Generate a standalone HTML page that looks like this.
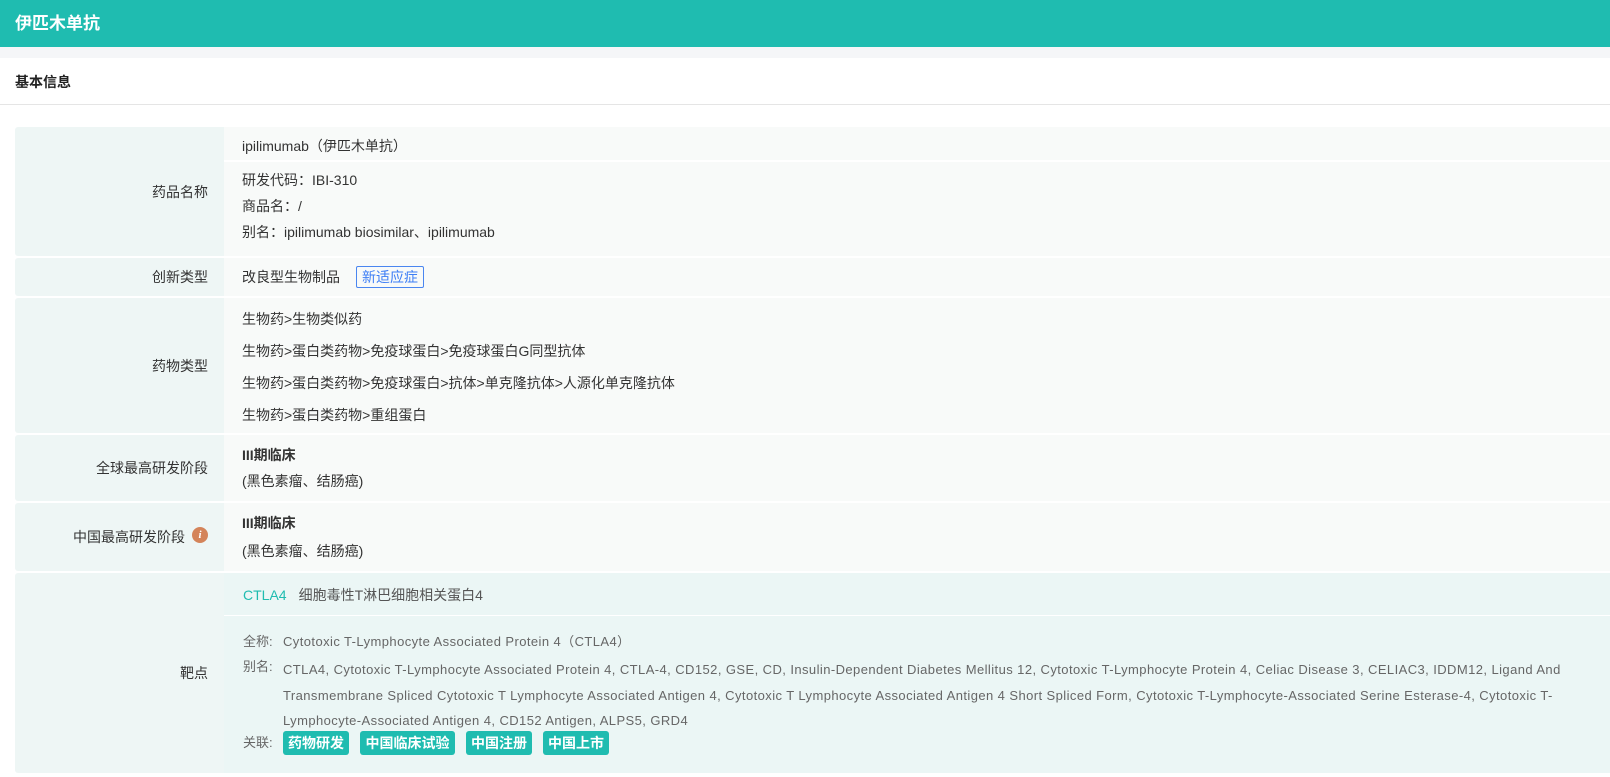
<!DOCTYPE html>
<html><head><meta charset="utf-8"><style>
*{margin:0;padding:0;box-sizing:border-box}
body{width:1610px;height:777px;overflow:hidden;background:#fff;font-family:"Liberation Sans","Noto Sans CJK SC",sans-serif;font-size:14px;color:#333;position:relative}
.hdr{position:absolute;left:0;top:0;width:1610px;height:47px;background:#1fbcb0;color:#fff;font-weight:bold;font-size:17px;line-height:47px;padding-left:15px}
.gray{position:absolute;left:0;top:47px;width:1610px;height:11px;background:#f5f6f8}
.sec{position:absolute;left:15px;top:71px;font-weight:bold;font-size:14px;line-height:22px;color:#222}
.line{position:absolute;left:0;top:104px;width:1610px;height:1px;background:#e5e5e5}
.lab{position:absolute;left:15px;width:209px;background:#eef6f5;border-radius:3px 0 0 3px;text-align:right;padding-right:16px;display:flex;align-items:center;justify-content:flex-end}
.val{position:absolute;left:224px;width:1386px;background:#f8faf9}
.t{position:absolute;white-space:nowrap;line-height:20px}
.tag{position:absolute;height:24px;line-height:24px;background:#1fbcb0;color:#fff;font-weight:bold;border-radius:3px;font-size:14px;text-align:center;white-space:nowrap}
.g{color:#666;font-size:13px;letter-spacing:0.42px}
</style></head><body>
<div class="hdr">伊匹木单抗</div>
<div class="gray"></div>
<div class="sec">基本信息</div>
<div class="line"></div>

<div class="lab" style="top:127px;height:129px">药品名称</div>
<div class="val" style="top:127px;height:33px"></div>
<div class="val" style="top:162px;height:94px"></div>
<div class="t" style="left:242px;top:136px">ipilimumab（伊匹木单抗）</div>
<div class="t" style="left:242px;top:170px">研发代码：IBI-310</div>
<div class="t" style="left:242px;top:196px">商品名：/</div>
<div class="t" style="left:242px;top:222px">别名：ipilimumab biosimilar、ipilimumab</div>

<div class="lab" style="top:258px;height:38px">创新类型</div>
<div class="val" style="top:258px;height:38px"></div>
<div class="t" style="left:242px;top:267px">改良型生物制品</div>
<div class="t" style="left:356px;top:266px;height:22px;line-height:20px;border:1px solid #4a86f0;color:#3d7ef5;padding:0 5px;border-radius:2px">新适应症</div>

<div class="lab" style="top:298px;height:135px">药物类型</div>
<div class="val" style="top:298px;height:135px"></div>
<div class="t" style="left:242px;top:309px">生物药&gt;生物类似药</div>
<div class="t" style="left:242px;top:341px">生物药&gt;蛋白类药物&gt;免疫球蛋白&gt;免疫球蛋白G同型抗体</div>
<div class="t" style="left:242px;top:373px">生物药&gt;蛋白类药物&gt;免疫球蛋白&gt;抗体&gt;单克隆抗体&gt;人源化单克隆抗体</div>
<div class="t" style="left:242px;top:405px">生物药&gt;蛋白类药物&gt;重组蛋白</div>

<div class="lab" style="top:435px;height:66px">全球最高研发阶段</div>
<div class="val" style="top:435px;height:66px"></div>
<div class="t" style="left:242px;top:445px;font-weight:bold">III期临床</div>
<div class="t" style="left:242px;top:471px">(黑色素瘤、结肠癌)</div>

<div class="lab" style="top:503px;height:68px">中国最高研发阶段<span style="display:inline-block;width:16px;height:16px;border-radius:50%;background:#d4845a;color:#fff;font-size:11px;font-style:italic;font-family:'Liberation Serif',serif;font-weight:bold;line-height:16px;text-align:center;margin-left:7px;margin-top:-4px">i</span></div>
<div class="val" style="top:503px;height:68px"></div>
<div class="t" style="left:242px;top:513px;font-weight:bold">III期临床</div>
<div class="t" style="left:242px;top:541px">(黑色素瘤、结肠癌)</div>

<div class="lab" style="top:573px;height:200px">靶点</div>
<div class="val" style="top:573px;height:42px;background:#ebf6f5"></div>
<div class="val" style="top:616px;height:157px;background:#ebf6f5"></div>
<div class="t" style="left:243px;top:585px;font-size:14px"><span style="color:#1fbcb0">CTLA4</span><span style="color:#555;margin-left:12px">细胞毒性T淋巴细胞相关蛋白4</span></div>
<div class="t g" style="left:243px;top:632px;letter-spacing:0">全称:</div>
<div class="t g" style="left:283px;top:632px">Cytotoxic T-Lymphocyte Associated Protein 4（CTLA4）</div>
<div class="t g" style="left:243px;top:657px;letter-spacing:0">别名:</div>
<div class="g" style="position:absolute;left:283px;top:657px;width:1285px;line-height:25.5px;white-space:normal">CTLA4, Cytotoxic T-Lymphocyte Associated Protein 4, CTLA-4, CD152, GSE, CD, Insulin-Dependent Diabetes Mellitus 12, Cytotoxic T-Lymphocyte Protein 4, Celiac Disease 3, CELIAC3, IDDM12, Ligand And Transmembrane Spliced Cytotoxic T Lymphocyte Associated Antigen 4, Cytotoxic T Lymphocyte Associated Antigen 4 Short Spliced Form, Cytotoxic T-Lymphocyte-Associated Serine Esterase-4, Cytotoxic T-Lymphocyte-Associated Antigen 4, CD152 Antigen, ALPS5, GRD4</div>
<div class="t g" style="left:243px;top:733px;letter-spacing:0">关联:</div>
<div class="tag" style="left:283px;top:731px;width:66px">药物研发</div>
<div class="tag" style="left:360px;top:731px;width:95px">中国临床试验</div>
<div class="tag" style="left:466px;top:731px;width:66px">中国注册</div>
<div class="tag" style="left:543px;top:731px;width:66px">中国上市</div>
</body></html>
